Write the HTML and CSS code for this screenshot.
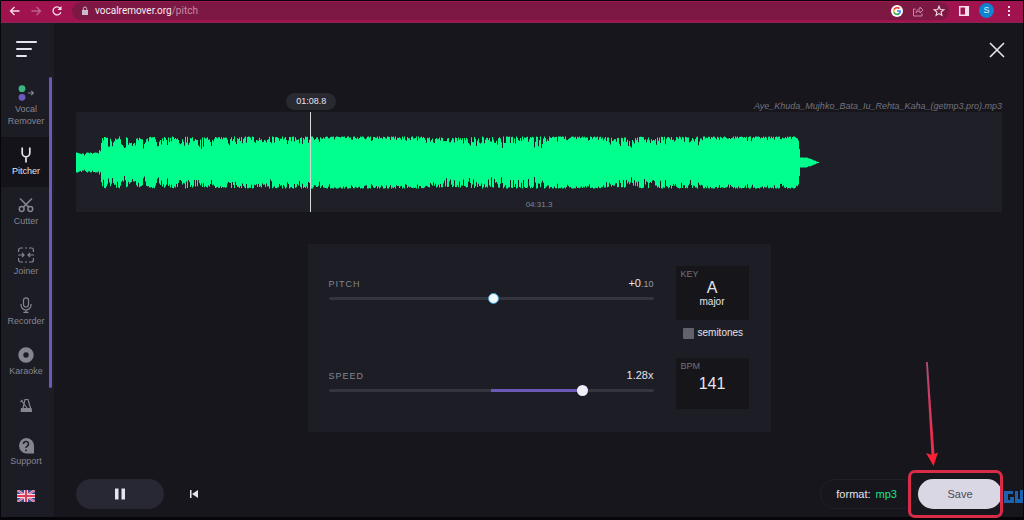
FILE: index.html
```html
<!DOCTYPE html>
<html lang="en">
<head>
<meta charset="utf-8">
<title>Pitcher</title>
<link rel="stylesheet" href="styles.css">
</head>
<body>
<div class="window">
  <header class="toolbar">
    <button class="tool" aria-label="Back"><svg width="12" height="12" viewBox="0 0 12 12"><path d="M10.500 6H2M5.500 2L1.500 6l4 4"/></svg></button>
    <button class="tool dim" aria-label="Forward"><svg width="12" height="12" viewBox="0 0 12 12"><path d="M1.500 6H10M6.500 2l4 4-4 4"/></svg></button>
    <button class="tool" aria-label="Reload"><svg width="12" height="12" viewBox="0 0 12 12"><path d="M9.800 7.200A4 4 0 1 1 9 3.200"/><path d="M10.500 1v4h-4z" class="solid"/></svg></button>
    <div class="address">
      <svg width="8" height="10" viewBox="0 0 8 10" aria-hidden="true"><path d="M1 4h6v5H1z" fill="#c9bcc8"/><path d="M2.300 4V2.700a1.700 1.700 0 0 1 3.400 0V4" fill="none" stroke="#c9bcc8"/></svg>
      <span class="url">vocalremover.org<span class="path">/pitch</span></span>
      <svg class="google" width="12" height="12" viewBox="0 0 12 12" aria-hidden="true"><circle cx="6" cy="6" r="6" fill="#fff"/><g fill="none" stroke-width="1.700"><path d="M8.400 3.700A3.300 3.300 0 0 0 3 4.700" stroke="#ea4335"/><path d="M3 4.600a3.300 3.300 0 0 0 0 2.800" stroke="#fbbc05"/><path d="M3 7.300a3.300 3.300 0 0 0 5.200 1.200" stroke="#34a853"/><path d="M8.200 8.500A3.300 3.300 0 0 0 9.300 6H6" stroke="#4285f4"/></g></svg>
      <button class="tool soft" aria-label="Share"><svg width="12" height="12" viewBox="0 0 12 12"><path d="M3.500 4H1.500v7h8.500V8.500M4 8c.3-2.700 1.800-4 4-4V2l3 3-3 3V6C6.300 6 5 6.600 4 8z"/></svg></button>
      <button class="tool" aria-label="Bookmark"><svg width="12" height="12" viewBox="0 0 12 12"><path d="M6 1.300l1.300 3.200 3.400.3-2.600 2.200.8 3.400L6 8.600l-2.900 1.800.8-3.400L1.300 4.800l3.400-.3z" stroke-width="1.100"/></svg></button>
    </div>
    <button class="tool" aria-label="Side panel"><svg width="12" height="12" viewBox="0 0 12 12"><path d="M1.700 1.700h8.600v8.600H1.700z" stroke-width="1.500"/><path d="M7 1h4v10H7z" class="solid"/></svg></button>
    <button class="avatar">S</button>
    <button class="tool" aria-label="Menu"><svg width="12" height="12" viewBox="0 0 12 12"><path d="M5 1h2v2H5zM5 5h2v2H5zM5 9h2v2H5z" class="dots"/></svg></button>
  </header>

  <div class="app">
    <aside class="sidebar">
      <button class="burger" aria-label="Menu"><span></span><span></span><span></span></button>
      <nav class="tools">
        <a class="item" href="#"><svg class="icon" viewBox="0 0 16 16"><g stroke="none"><circle cx="4" cy="3.700" r="3.400" fill="#3cb57e"/><circle cx="4" cy="12.300" r="3.400" fill="#6d5bbd"/></g><path d="M10 8h5.500M13.200 5.800L15.400 8l-2.200 2.200"/></svg>Vocal<br>Remover</a>
        <a class="item active" href="#"><svg class="icon" viewBox="0 0 16 16"><path d="M4.200 .5v5.500a3.800 3.800 0 0 0 7.600 0V.5M8 10v5.500" stroke-width="1.700"/></svg>Pitcher</a>
        <a class="item" href="#"><svg class="icon" viewBox="0 0 16 16"><g stroke-width="1.500"><circle cx="3.700" cy="12" r="2.400"/><circle cx="12.300" cy="12" r="2.400"/><path d="M2 1.500l8.600 8.600M14 1.500l-8.600 8.600"/></g></svg>Cutter</a>
        <a class="item" href="#"><svg class="icon" viewBox="0 0 16 16"><path d="M.6 5V3A2 2 0 0 1 2.600 1H5M7 1h2M11 1h2.400a2 2 0 0 1 2 2v2M.6 11v2a2 2 0 0 0 2 2H5M7 15h2M11 15h2.400a2 2 0 0 0 2-2v-2M0 8h6M4 6l2 2-2 2M16 8h-6M12 6l-2 2 2 2"/></svg>Joiner</a>
        <a class="item" href="#"><svg class="icon" viewBox="0 0 16 16"><rect x="5.500" y=".8" width="5" height="9.200" rx="2.500"/><path d="M3 7v1a5 5 0 0 0 10 0V7M8 13v2M5.500 15.300h5"/></svg>Recorder</a>
        <a class="item" href="#"><svg class="icon" viewBox="0 0 16 16"><circle cx="8" cy="8" r="5.200" stroke-width="5"/></svg>Karaoke</a>
        <a class="item" href="#" aria-label="Metronome"><svg class="icon" viewBox="0 0 16 16"><path d="M4.600 13L7 2.500h3L13 13M9 11L3.500 3.500M2.500 5l2-2"/><path d="M3 11h10.500l.7 4H2.500z" fill="#85858f" stroke="none"/></svg></a>
      </nav>
      <a class="support" href="#"><svg class="icon" viewBox="0 0 16 16"><path d="M8 0a8 8 0 0 1 8 8v7.500H8A7.800 7.800 0 0 1 8 0z" fill="#85858f" stroke="none"/><path d="M5.500 6a2.500 2.500 0 1 1 3.700 2.100C8.300 8.700 8 9 8 10M8 11.500v1.700" stroke="#1c1c25" stroke-width="1.500"/></svg>Support</a>
      <button class="flag" aria-label="Language"><svg width="18" height="12" viewBox="0 0 18 12"><path d="M0 0h18v12H0z" fill="#3b4a94"/><path d="M0 0l18 12M18 0L0 12" stroke="#e6d3e2" stroke-width="2.200"/><path d="M0 0l18 12M18 0L0 12" stroke="#d8486a" stroke-width="1"/><path d="M9 0v12M0 6h18" stroke="#f0dfe8" stroke-width="4"/><path d="M9 0v12M0 6h18" stroke="#dd3a5c" stroke-width="2.200"/></svg></button>
      <div class="scrollbar"></div>
    </aside>

    <main class="main">
      <div class="top"><button class="close" aria-label="Close"><svg width="16" height="16" viewBox="0 0 16 16"><path d="M1 1l14 14M15 1L1 15"/></svg></button></div>
      <p class="filename">Aye_Khuda_Mujhko_Bata_Iu_Rehta_Kaha_(getmp3.pro).mp3</p>
      <section class="track">
        <svg class="wave" viewBox="0 0 926 100" preserveAspectRatio="none" aria-hidden="true"><path id="wave" fill="#00ff8c"/></svg>
        <span class="duration">04:31.3</span>
        <div class="playhead"><span class="time">01:08.8</span></div>
      </section>

      <section class="panel">
        <div class="control">
          <div class="caption"><label for="pitch">PITCH</label><output>+0<small>.10</small></output></div>
          <input class="slider pitch" id="pitch" type="range" min="0" max="1000" value="508">
        </div>
        <div class="side">
          <div class="box key"><span class="box-name">KEY</span><span class="big">A</span><span class="mode">major</span></div>
          <label class="check"><input type="checkbox">semitones</label>
        </div>
        <div class="control">
          <div class="caption"><label for="speed">SPEED</label><output>1.28x</output></div>
          <input class="slider speed" id="speed" type="range" min="0" max="1000" value="790">
        </div>
        <div class="box bpm"><span class="box-name">BPM</span><span class="big">141</span></div>
      </section>

      <footer class="bottom">
        <button class="pause" aria-label="Pause"><svg width="10" height="12" viewBox="0 0 10 12"><path d="M0 .5h3.500v11H0zM6.500 .5H10v11H6.500z"/></svg></button>
        <button class="restart" aria-label="Restart"><svg width="8" height="8" viewBox="0 0 8 8"><path d="M0 0h1.500v8H0zM8 0v8L2 4z"/></svg></button>
        <button class="format">format: <span>mp3</span></button>
        <div class="save-wrap">
          <button class="save">Save</button>
          <svg class="logo" width="19" height="14" viewBox="0 0 19 14" aria-hidden="true"><path d="M0 1h9v3H4v6h2V7h4v6H0zM11 1h3v8h2V0h3v13h-8z"/></svg>
          <div class="frame"></div>
          <svg class="arrow" width="12" height="104" viewBox="0 0 12 104" aria-hidden="true"><defs><linearGradient id="shaft" x1="0" y1="0" x2="0" y2="1"><stop offset="0" stop-color="#b34a79"/><stop offset=".5" stop-color="#d8375c"/><stop offset="1" stop-color="#f32c43"/></linearGradient></defs><path class="shaft" d="M0 0h1.800L8.500 93H5.500z"/><path class="head" d="M0 91l6 2 6-2.500L7.500 104z"/></svg>
        </div>
      </footer>
    </main>
  </div>
</div>
<script src="wave.js"></script>
</body>
</html>
```
FILE: styles.css
```css
* { box-sizing: border-box; }
body {
  margin: 0;
  background: #060509;
  color: #e4e4ec;
  font-family: "Liberation Sans", Arial, sans-serif;
  font-size: 11px;
}
button { padding: 0; border: 0; background: none; color: inherit; font: inherit; }
a { color: inherit; text-decoration: none; }
svg { display: block; flex: none; }

.window { display: flex; flex-direction: column; min-height: 100vh; padding: 1px 1px 3px; }

.toolbar {
  display: flex;
  align-items: center;
  height: 22px;
  padding: 0 8px 2px;
  gap: 9px;
  background: #a0134f;
  border-bottom: 1px solid #8a2352;
}
.tool svg { fill: none; stroke: #f6dfe9; stroke-width: 1.3; }
.tool .solid, .tool .dots { fill: #f6dfe9; stroke: none; }
.tool.dim svg { stroke: #c0628c; }
.tool.soft svg { stroke: #c78aa6; stroke-width: 1; }
.address {
  flex: 1;
  display: flex;
  align-items: center;
  gap: 9px;
  height: 18px;
  padding: 0 4px 0 9px;
  border-radius: 9px;
  background: #7d1843;
}
.url { flex: 1; margin-left: -3px; font: 10px/14px Roboto, sans-serif; color: #f7e9f0; }
.path { color: #c78aa6; }
.avatar {
  width: 15px;
  height: 15px;
  border-radius: 50%;
  background: #0f83cf;
  color: #e2f1fb;
  font-size: 9px;
  line-height: 15px;
}

.app { flex: 1; display: flex; background: #17161c; }

.sidebar {
  position: relative;
  display: flex;
  flex-direction: column;
  width: 53px;
  background: #1c1c25;
  color: #85858f;
  font-size: 9px;
  line-height: 12px;
  text-align: center;
}
.burger { display: grid; gap: 5px; width: 21px; margin: 18px 0 0 15px; }
.burger span { height: 2px; border-radius: 1px; background: #e4e4ec; }
.burger span:nth-child(2) { width: 16px; }
.burger span:nth-child(3) { width: 11px; }
.tools { margin-top: 18px; width: 50px; height: 340px; overflow: hidden; }
.item { display: block; padding: 10px 0; }
.icon {
  width: 16px;
  height: 16px;
  margin: 0 auto 2px;
  fill: none;
  stroke: #85858f;
  stroke-width: 1.2;
}
.active { background: #141319; color: #e4e4ec; }
.active .icon { stroke: #e4e4ec; }
.support { width: 50px; margin-top: 23px; }
.support .icon { margin-bottom: 1px; }
.flag { margin: 23px 0 14px 16px; width: 18px; }
.scrollbar {
  position: absolute;
  top: 54px;
  right: 2px;
  width: 3px;
  height: 311px;
  border-radius: 2px;
  background: #6a59b8;
}

.main { flex: 1; display: flex; flex-direction: column; min-width: 0; padding: 0 21px 8px 22px; }
.top { display: flex; justify-content: flex-end; padding-top: 19px; margin-right: -3px; }
.close svg { stroke: #e4e4ec; stroke-width: 1.6; }
.filename { margin: 42px 0 0; font-size: 9px; line-height: 12px; font-style: italic; text-align: right; color: #73737c; }
.track { position: relative; height: 100px; background: #1f1f27; }
.wave { width: 100%; height: 100%; }
.duration {
  position: absolute;
  bottom: 2px;
  left: 0;
  right: 0;
  font-size: 8px;
  line-height: 10px;
  text-align: center;
  color: #85858f;
}
.playhead { position: absolute; top: 0; bottom: 0; left: 25.3%; width: 1px; background: #d5dad9; }
.time {
  position: absolute;
  bottom: 100%;
  left: -24px;
  width: 50px;
  margin-bottom: 2px;
  border-radius: 9px;
  background: #292932;
  font-size: 9px;
  line-height: 17px;
  text-align: center;
}

.panel {
  display: grid;
  grid-template-columns: 1fr 73px;
  grid-template-rows: 92px auto;
  column-gap: 22px;
  width: 50%;
  margin: 32px auto 0;
  padding: 22px 22px 23px 21px;
  background: #1d1d26;
}
.control { padding-top: 10px; }
.caption { display: flex; justify-content: space-between; align-items: baseline; line-height: 14px; }
.caption label { font-size: 9px; letter-spacing: 1px; color: #85858f; }
.caption small { font-size: 9px; color: #9a9aa4; }
.slider { appearance: none; display: block; width: 100%; height: 11px; margin: 2px 0 0; background: none; }
.slider::-webkit-slider-runnable-track { height: 3px; border-radius: 2px; background: #35353f; }
.slider::-webkit-slider-thumb {
  appearance: none;
  width: 11px;
  height: 11px;
  margin-top: -4px;
  border-radius: 50%;
  background: #f1eefb;
}
.pitch::-webkit-slider-thumb { background: #f0faff; border: 1px solid #3b9cc8; }
.speed::-webkit-slider-runnable-track { background: linear-gradient(90deg, #35353f 50%, #6a59b8 50% 79%, #35353f 79%); }
.box { display: flex; flex-direction: column; align-items: center; background: #15151a; }
.key { height: 54px; }
.bpm { height: 51px; }
.box-name { align-self: flex-start; padding: 3px 0 0 5px; font-size: 9px; line-height: 11px; color: #73737c; }
.big { font-size: 16px; line-height: 16px; }
.bpm .big { margin-top: 4px; }
.mode { font-size: 10px; line-height: 12px; }
.check { display: flex; align-items: center; gap: 4px; margin: 7px 0 0 7px; font-size: 10px; line-height: 12px; }
.check input { appearance: none; width: 11px; height: 11px; margin: 0; border-radius: 1px; background: #62626d; }

.bottom { display: flex; align-items: center; margin-top: auto; }
.pause { display: grid; place-items: center; width: 88px; height: 30px; border-radius: 15px; background: #272833; }
.pause svg, .restart svg { fill: #e4e4ec; }
.restart { margin-left: 26px; }
.format {
  height: 30px;
  margin-left: auto;
  padding: 0 20px 0 15px;
  border: 1px solid #202027;
  border-radius: 15px;
}
.format span { margin-left: 2px; color: #1fe08b; }
.save-wrap { position: relative; }
.save { width: 84px; height: 30px; border-radius: 15px; background: #d9d7e3; color: #4b4a55; }
.frame { position: absolute; inset: -9px -1px -9px -10px; border: 3px solid #d92c48; border-radius: 7px; }
.logo { position: absolute; left: 86px; top: 11px; fill: #1c62ae; }
.arrow { position: absolute; left: 8px; top: -117px; }
.shaft { fill: url(#shaft); }
.head { fill: #fb2135; }
```
FILE: wave.js
```js
// Deterministic noise, so the waveform is the same on every load.
let seed = 7;
const rand = () => (seed = (seed * 16807) % 2147483647) / 2147483647;

// Loudness envelope as [x, quietest, loudest] points.
const points = [
  [0, 5, 10], [21, 6, 10], [24, 7, 15], [26, 12, 25], [30, 15, 26], [33, 10, 26], [36, 10, 19],
  [40, 18, 26], [43, 16, 26], [46, 10, 18], [50, 12, 26], [57, 10, 19], [61, 14, 26], [68, 11, 22],
  [74, 16, 26], [78, 16, 26], [81, 10, 18], [86, 16, 26], [91, 13, 26], [95, 17, 26], [100, 18, 26],
  [104, 11, 21], [108, 12, 26], [125, 12, 25], [160, 14, 26], [230, 14, 26], [245, 19, 26], [270, 21, 26],
  [345, 20, 26], [355, 12, 25], [385, 12, 25], [400, 11, 26], [470, 12, 26], [485, 21, 26], [520, 21, 26],
  [540, 12, 25], [575, 13, 26], [615, 13, 26], [630, 20, 26], [720, 21, 26], [722, 20, 22],
  [724, 5, 5], [730, 4, 5], [736, 2, 3], [743, 0, 0]
];

function amplitude(x, noise) {
  const i = Math.max(1, points.findIndex(p => p[0] >= x));
  const a = points[i - 1], b = points[i];
  const t = (x - a[0]) / (b[0] - a[0]);
  const low = a[1] + (b[1] - a[1]) * t;
  const high = a[2] + (b[2] - a[2]) * t;
  return high - (high - low) * noise ** 3;
}

// One bar per pixel column; both halves dip together, each with its own variation.
let d = "";
for (let x = 0; x < 743; x++) {
  const shared = rand();
  const up = amplitude(x, shared * 0.7 + rand() * 0.3);
  const down = amplitude(x, shared * 0.7 + rand() * 0.3);
  d += `M${x} ${(50.5 - up).toFixed(1)}h1V${(50.5 + down).toFixed(1)}h-1z`;
}
document.getElementById("wave").setAttribute("d", d);
```
